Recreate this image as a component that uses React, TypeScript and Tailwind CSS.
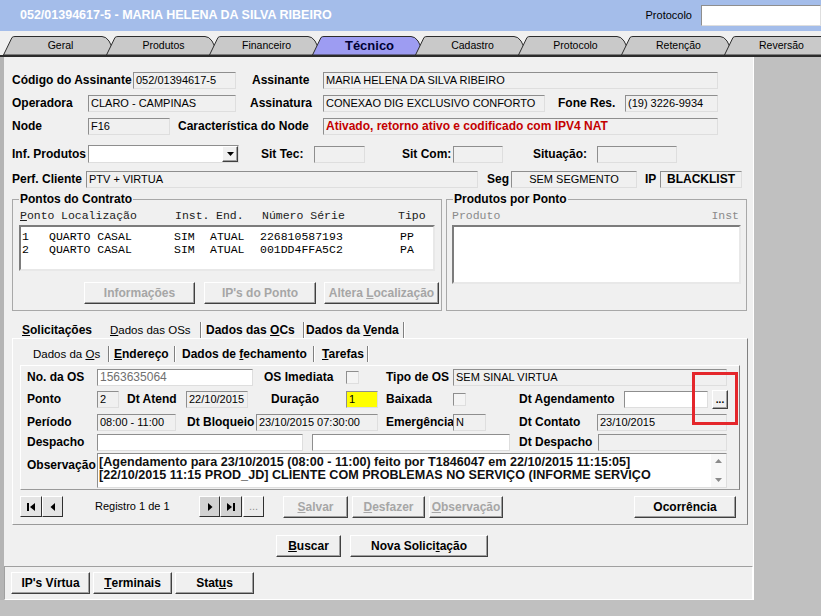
import React from "react";

type Kids = { className?: string; children?: React.ReactNode };

const sunken = "border border-t-[#8e8e8e] border-l-[#8e8e8e] border-b-[#dedede] border-r-[#dedede]";
const raised = "border border-t-white border-l-white border-b-[#404040] border-r-[#404040] shadow-[inset_-1px_-1px_0_#a0a0a0]";

function Lbl({ className = "", children }: Kids) {
  return (
    <div className={`shrink-0 whitespace-nowrap text-[12px] font-bold leading-[17px] text-black ${className}`}>
      {children}
    </div>
  );
}

function Field({
  className = "",
  children,
  tone = "gray",
  txt = "text-[11px] text-black",
}: Kids & { tone?: "gray" | "white" | "yellow"; txt?: string }) {
  const bg = tone === "white" ? "bg-white" : tone === "yellow" ? "bg-[#ffff00]" : "bg-[#f0f0f0]";
  return (
    <div className={`h-[17px] shrink-0 overflow-hidden whitespace-nowrap px-[2px] leading-[15px] ${sunken} ${bg} ${txt} ${className}`}>
      {children}
    </div>
  );
}

function Btn({ className = "", children, off = false }: Kids & { off?: boolean }) {
  return (
    <div
      className={`flex h-[22px] shrink-0 items-center justify-center whitespace-nowrap bg-[#f0f0f0] text-[12px] font-bold leading-none ${raised} ${
        off ? "text-[#a6a6a6]" : "text-black"
      } ${className}`}
    >
      {children}
    </div>
  );
}

function Check() {
  return <div className={`h-[13px] w-[13px] shrink-0 bg-[#f4f4f4] ${sunken}`} />;
}

function Sep() {
  return <div className="h-[16px] w-[2px] shrink-0 border-l border-r border-l-[#808080] border-r-white" />;
}

function TopTab({ label, active = false }: { label: string; active?: boolean }) {
  return (
    <div className="relative h-[19px] w-[103px] shrink-0">
      <svg className="absolute left-0 top-0 overflow-visible" width="116" height="19" viewBox="0 0 116 19">
        <path
          d="M0.5 19 L9 1.5 Q10 0.5 12 0.5 L99 0.5 Q103 0.5 106 5 L113 19 Z"
          fill={active ? "#9d9cf2" : "#c9c9c9"}
          stroke="#2d2d2d"
          strokeWidth="1"
        />
      </svg>
      <span
        className={`absolute inset-y-0 left-[6px] right-[-6px] text-center leading-[19px] ${
          active ? "text-[13px] font-bold text-[#000033]" : "text-[10.5px] text-black"
        }`}
      >
        {label}
      </span>
    </div>
  );
}

function NavBtn({ className = "", children }: Kids) {
  return (
    <div
      className={`flex h-[21px] shrink-0 items-center justify-center border border-t-white border-l-white border-b-[#303030] border-r-[#303030] ${className}`}
    >
      {children}
    </div>
  );
}

const topTabs = ["Geral", "Produtos", "Financeiro", "Técnico", "Cadastro", "Protocolo", "Retenção", "Reversão"];

const mono = "font-['Liberation_Mono','Courier_New',monospace] text-[11.5px] leading-[13px]";

const pontos = [
  ["1", "QUARTO CASAL", "SIM", "ATUAL", "226810587193", "PP"],
  ["2", "QUARTO CASAL", "SIM", "ATUAL", "001DD4FFA5C2", "PA"],
];

export default function App() {
  return (
    <div className="relative h-[616px] w-[821px] overflow-hidden bg-[#c0c0c0] font-['Liberation_Sans',Arial,sans-serif] text-black">
      {/* title bar */}
      <div className="flex h-[31px] items-center bg-[#a4bdea] pl-[20px]">
        <span className="text-[12.5px] font-bold text-white">052/01394617-5 - MARIA HELENA DA SILVA RIBEIRO</span>
        <span className="ml-auto mr-[9px] text-[11px]">Protocolo</span>
        <div className={`h-[21px] w-[120px] bg-white ${sunken}`} />
      </div>

      {/* main tabs */}
      <div className="flex h-[24px] items-end bg-[#f0f0f0] pl-[3px]">
        {topTabs.map((t) => (
          <TopTab key={t} label={t} active={t === "Técnico"} />
        ))}
      </div>
      <div className="h-[2px] bg-[#2b2b2b]" />

      <div className="flex h-[543px]">
        <div className="w-[4px] bg-[#b4b4b4]" />
        <div className="flex w-[750px] flex-col border-r border-r-white bg-[#f0f0f0]">
          <div className="flex flex-col pl-[8px] pt-[15px]">
            {/* row 1 */}
            <div className="flex h-[17px] items-center">
              <Lbl className="w-[121px]">Código do Assinante</Lbl>
              <Field className="w-[103px]">052/01394617-5</Field>
              <Lbl className="w-[87px] pl-[16px]">Assinante</Lbl>
              <Field className="w-[395px]">MARIA HELENA DA SILVA RIBEIRO</Field>
            </div>
            {/* row 2 */}
            <div className="mt-[6px] flex h-[17px] items-center">
              <Lbl className="w-[76px]">Operadora</Lbl>
              <Field className="w-[148px]">CLARO - CAMPINAS</Field>
              <Lbl className="w-[87px] pl-[14px]">Assinatura</Lbl>
              <Field className="w-[222px]">CONEXAO DIG EXCLUSIVO CONFORTO</Field>
              <Lbl className="w-[80px] pl-[13px]">Fone Res.</Lbl>
              <Field className="w-[93px]">(19) 3226-9934</Field>
            </div>
            {/* row 3 */}
            <div className="mt-[6px] flex h-[17px] items-center">
              <Lbl className="w-[76px]">Node</Lbl>
              <Field className="w-[82px]">F16</Field>
              <Lbl className="w-[153px] pl-[8px]">Característica do Node</Lbl>
              <Field className="w-[395px]" txt="text-[12px] font-bold text-[#c40000]">
                Ativado, retorno ativo e codificado com IPV4 NAT
              </Field>
            </div>
            {/* row 4 */}
            <div className="mt-[10px] flex h-[18px] items-center">
              <Lbl className="w-[76px]">Inf. Produtos</Lbl>
              <div className={`flex h-[18px] w-[151px] shrink-0 justify-end bg-white ${sunken}`}>
                <div className={`flex h-full w-[16px] items-center justify-center bg-[#f0f0f0] ${raised}`}>
                  <svg width="7" height="4" viewBox="0 0 7 4">
                    <path d="M0 0 L7 0 L3.5 4 Z" fill="#000" />
                  </svg>
                </div>
              </div>
              <Lbl className="w-[75px] pl-[22px]">Sit Tec:</Lbl>
              <Field className="w-[51px]" />
              <Lbl className="w-[88px] pl-[37px]">Sit Com:</Lbl>
              <Field className="w-[50px]" />
              <Lbl className="w-[94px] pl-[30px]">Situação:</Lbl>
              <Field className="w-[80px]" />
            </div>
            {/* row 5 */}
            <div className="mt-[8px] flex h-[17px] items-center">
              <Lbl className="w-[74px]">Perf. Cliente</Lbl>
              <Field className="w-[392px]">PTV + VIRTUA</Field>
              <Lbl className="w-[33px] pl-[9px]">Seg</Lbl>
              <Field className="w-[126px] text-center">SEM SEGMENTO</Field>
              <Lbl className="w-[23px] pl-[8px]">IP</Lbl>
              <Field className="w-[82px] text-center" txt="text-[12px] font-bold text-black">
                BLACKLIST
              </Field>
            </div>

            {/* group boxes */}
            <div className="mt-[5px] flex">
              <fieldset className="h-[118px] w-[430px] min-w-0 shrink-0 border border-[#a8a8a8] px-[6px]">
                <legend className="px-[1px] text-[12px] font-bold leading-[13px]">Pontos do Contrato</legend>
                <div className={`mt-[3px] flex pl-[1px] text-[#202020] ${mono}`}>
                  <span className="w-[41px]">
                    <u>P</u>onto
                  </span>
                  <span className="w-[114px]">Localização</span>
                  <span className="w-[41px]">Inst.</span>
                  <span className="w-[46px]">End.</span>
                  <span className="w-[136px]">Número Série</span>
                  <span>Tipo</span>
                </div>
                <div className={`mt-[3px] h-[46px] w-[416px] border-2 border-t-[#7c7c7c] border-l-[#7c7c7c] border-b-[#e8e8e8] border-r-[#e8e8e8] bg-white pl-[1px] pt-[3px] ${mono}`}>
                  {pontos.map((p) => (
                    <div key={p[0]} className="flex whitespace-pre">
                      <span className="w-[27px]">{p[0]}</span>
                      <span className="w-[125px]">{p[1]}</span>
                      <span className="w-[36px]">{p[2]}</span>
                      <span className="w-[50px]">{p[3]}</span>
                      <span className="w-[140px]">{p[4]}</span>
                      <span>{p[5]}</span>
                    </div>
                  ))}
                </div>
                <div className="mt-[11px] flex w-[420px] pl-[65px]">
                  <Btn off className="w-[111px]">
                    Informações
                  </Btn>
                  <Btn off className="ml-[9px] w-[112px]">
                    IP's do Ponto
                  </Btn>
                  <Btn off className="ml-[8px] w-[115px]">
                    Altera&nbsp;<u>L</u>ocalização
                  </Btn>
                </div>
              </fieldset>
              <fieldset className="ml-[4px] h-[118px] w-[301px] min-w-0 shrink-0 border border-[#a8a8a8] px-[5px]">
                <legend className="ml-[1px] px-[1px] text-[12px] font-bold leading-[13px]">Produtos por Ponto</legend>
                <div className={`mt-[3px] flex w-[289px] justify-between pr-[2px] text-[#8a8a8a] ${mono}`}>
                  <span>Produto</span>
                  <span>Inst</span>
                </div>
                <div className="mt-[3px] h-[59px] w-[289px] border-2 border-t-[#7c7c7c] border-l-[#7c7c7c] border-b-[#e8e8e8] border-r-[#e8e8e8] bg-white" />
              </fieldset>
            </div>

            {/* lower tab control */}
            <div className="flex h-[27px] items-end pl-[10px] text-[12px] leading-[16px]">
              <span className="w-[88px] font-bold">
                <u>S</u>olicitações
              </span>
              <span className="w-[90px] text-[11.5px]">
                <u>D</u>ados das OSs
              </span>
              <Sep />
              <span className="w-[101px] pl-[4px] font-bold">
                Dados das <u>O</u>Cs
              </span>
              <Sep />
              <span className="w-[98px] pl-[1px] font-bold">
                Dados da <u>V</u>enda
              </span>
              <Sep />
            </div>
            <div className="h-[187px] w-[736px] border border-t-white border-l-white border-b-[#9a9a9a] border-r-[#808080] pl-[7px]">
              <div className="flex h-[26px] items-end pb-[3px] text-[12px] leading-[16px]">
                <span className="w-[88px] pl-[13px] text-[11.5px]">
                  Dados da <u>O</u>s
                </span>
                <Sep />
                <span className="w-[64px] pl-[4px] font-bold">
                  <u>E</u>ndereço
                </span>
                <Sep />
                <span className="w-[137px] pl-[6px] font-bold">
                  Dados de <u>f</u>echamento
                </span>
                <Sep />
                <span className="w-[52px] pl-[7px] font-bold">
                  <u>T</u>arefas
                </span>
                <Sep />
              </div>
              <div className="h-[125px] w-[720px] border border-t-white border-l-white border-b-[#9a9a9a] border-r-[#808080] pl-[6px] pt-[3px]">
                {/* row A */}
                <div className="flex h-[17px] items-center">
                  <Lbl className="w-[70px]">No. da OS</Lbl>
                  <Field tone="white" className="w-[156px]" txt="text-[12px] text-[#707070]">
                    1563635064
                  </Field>
                  <Lbl className="w-[93px] pl-[11px]">OS Imediata</Lbl>
                  <Check />
                  <Lbl className="w-[94px] pl-[27px]">Tipo de OS</Lbl>
                  <Field className="w-[274px]">SEM SINAL VIRTUA</Field>
                </div>
                {/* row B */}
                <div className="mt-[5px] flex h-[17px] items-center">
                  <Lbl className="w-[70px]">Ponto</Lbl>
                  <Field className="w-[22px]">2</Field>
                  <Lbl className="w-[67px] pl-[8px]">Dt Atend</Lbl>
                  <Field className="w-[62px]">22/10/2015</Field>
                  <Lbl className="w-[98px] pl-[23px]">Duração</Lbl>
                  <Field tone="yellow" className="w-[32px]">
                    1
                  </Field>
                  <Lbl className="w-[75px] pl-[8px]">Baixada</Lbl>
                  <Check />
                  <Lbl className="w-[158px] pl-[53px]">Dt Agendamento</Lbl>
                  <Field tone="white" className="w-[84px]" />
                  <div className={`ml-[4px] flex h-[19px] w-[16px] shrink-0 items-end justify-center bg-[#f0f0f0] pb-[3px] text-[10px] font-bold leading-none ${raised}`}>
                    ...
                  </div>
                </div>
                {/* row C */}
                <div className="mt-[6px] flex h-[17px] items-center">
                  <Lbl className="w-[70px]">Período</Lbl>
                  <Field className="w-[79px]">08:00 - 11:00</Field>
                  <Lbl className="w-[80px] pl-[11px]">Dt Bloqueio</Lbl>
                  <Field className="w-[122px]">23/10/2015 07:30:00</Field>
                  <Lbl className="w-[75px] pl-[8px]">Emergência</Lbl>
                  <Field className="w-[33px]">N</Field>
                  <Lbl className="w-[111px] pl-[33px]">Dt Contato</Lbl>
                  <Field className="w-[130px]">23/10/2015</Field>
                </div>
                {/* row D */}
                <div className="mt-[3px] flex h-[17px] items-center">
                  <Lbl className="w-[70px]">Despacho</Lbl>
                  <Field tone="white" className="w-[206px]" />
                  <Field tone="white" className="ml-[9px] w-[198px]" />
                  <Lbl className="w-[88px] pl-[9px]">Dt Despacho</Lbl>
                  <Field className="w-[129px]" />
                </div>
                {/* row E */}
                <div className="mt-[2px] flex items-start">
                  <Lbl className="mt-[4px] w-[70px]">Observação</Lbl>
                  <div className={`flex h-[35px] w-[630px] shrink-0 bg-white ${sunken}`}>
                    <div className="flex-1 overflow-hidden whitespace-nowrap pl-[1px] pt-[2px] text-[12.6px] font-bold leading-[13px] text-[#101010]">
                      <div>[Agendamento para 23/10/2015 (08:00 - 11:00) feito por T1846047 em 22/10/2015 11:15:05]</div>
                      <div>[22/10/2015 11:15 PROD_JD] CLIENTE COM PROBLEMAS NO SERVIÇO (INFORME SERVIÇO</div>
                    </div>
                    <div className="flex w-[15px] shrink-0 flex-col items-center justify-between bg-[#f7f7f7] py-[5px]">
                      <svg width="7" height="4" viewBox="0 0 7 4">
                        <path d="M0 4 L7 4 L3.5 0 Z" fill="#8a8a8a" />
                      </svg>
                      <svg width="7" height="4" viewBox="0 0 7 4">
                        <path d="M0 0 L7 0 L3.5 4 Z" fill="#8a8a8a" />
                      </svg>
                    </div>
                  </div>
                </div>
              </div>

              {/* navigation row */}
              <div className="mt-[6px] flex h-[21px] items-center">
                <NavBtn className="w-[22px] bg-[#e4e4e4]">
                  <svg width="10" height="10" viewBox="0 0 10 10">
                    <rect x="1" y="1" width="2" height="8" fill="#000" />
                    <path d="M9 1 L4 5 L9 9 Z" fill="#000" />
                  </svg>
                </NavBtn>
                <NavBtn className="w-[21px] bg-[#e4e4e4]">
                  <svg width="10" height="10" viewBox="0 0 10 10">
                    <path d="M7 1 L2.5 5 L7 9 Z" fill="#000" />
                  </svg>
                </NavBtn>
                <span className="ml-[32px] w-[104px] shrink-0 text-[11px]">Registro 1 de 1</span>
                <NavBtn className="w-[21px] bg-[#d2d2d2]">
                  <svg width="10" height="10" viewBox="0 0 10 10">
                    <path d="M3 1 L7.5 5 L3 9 Z" fill="#000" />
                  </svg>
                </NavBtn>
                <NavBtn className="w-[22px] bg-[#d2d2d2]">
                  <svg width="10" height="10" viewBox="0 0 10 10">
                    <path d="M1 1 L6 5 L1 9 Z" fill="#000" />
                    <rect x="7" y="1" width="2" height="8" fill="#000" />
                  </svg>
                </NavBtn>
                <NavBtn className="ml-[1px] w-[21px] bg-[#ececec] text-[11px] text-[#909090]">...</NavBtn>
                <Btn off className="ml-[19px] h-[21px] w-[65px]">
                  <u>S</u>alvar
                </Btn>
                <Btn off className="ml-[4px] h-[21px] w-[73px]">
                  <u>D</u>esfazer
                </Btn>
                <Btn off className="ml-[4px] h-[21px] w-[74px]">
                  <u>O</u>bservação
                </Btn>
                <Btn className="ml-[131px] h-[21px] w-[102px]">Ocorrência</Btn>
              </div>
            </div>

            <div className="mt-[10px] flex pl-[264px]">
              <Btn className="w-[65px]">
                <u>B</u>uscar
              </Btn>
              <Btn className="ml-[9px] w-[138px]">
                Nova Solici<u>t</u>ação
              </Btn>
            </div>
          </div>

          <div className="mt-[9px] flex h-[34px] items-center gap-[3px] border border-t-[#a0a0a0] border-l-[#a0a0a0] border-b-white border-r-white pl-[6px]">
            <Btn className="w-[79px]">IP's Vírtua</Btn>
            <Btn className="w-[79px]">
              <u>T</u>erminais
            </Btn>
            <Btn className="w-[79px]">
              Stat<u>u</u>s
            </Btn>
          </div>
        </div>
        <div className="flex-1" />
      </div>

      {/* annotation */}
      <div className="absolute left-[692px] top-[372px] h-[53px] w-[46px] border-[3px] border-[#e4262b]" />
    </div>
  );
}
